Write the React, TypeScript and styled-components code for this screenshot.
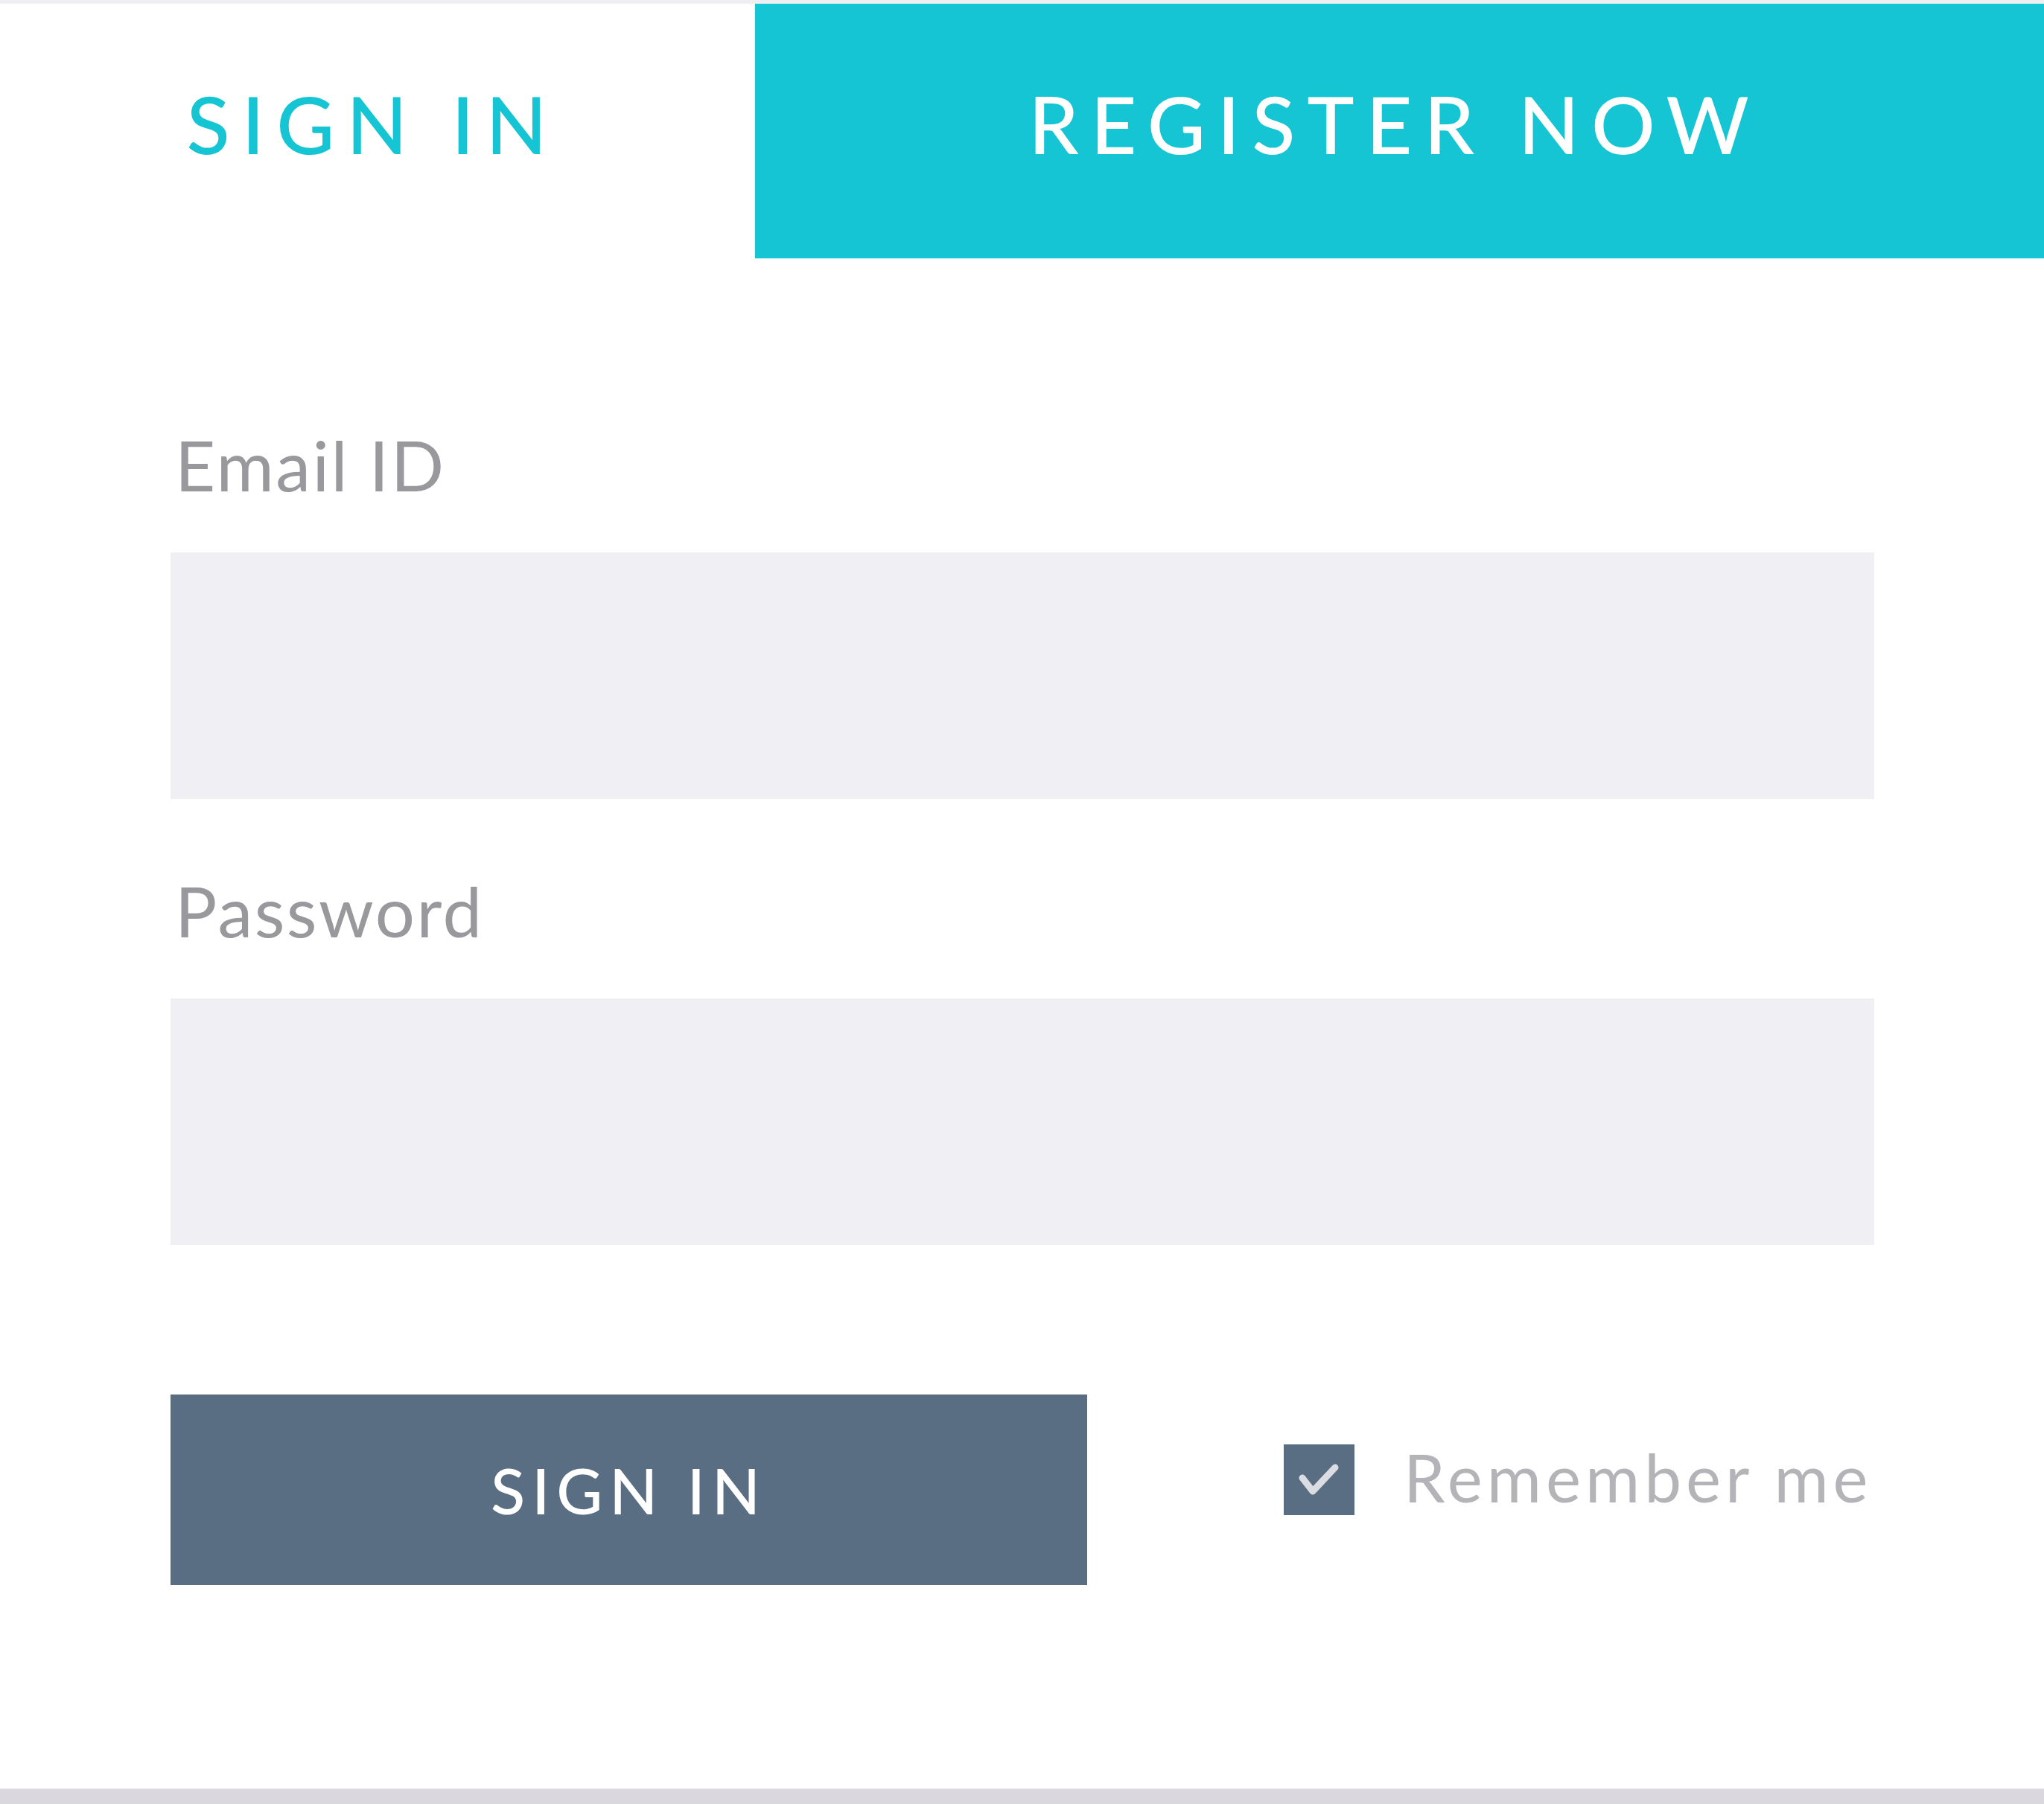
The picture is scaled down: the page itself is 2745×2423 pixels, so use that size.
import React from "react";
import styled, { createGlobalStyle } from "styled-components";

const Global = createGlobalStyle`
  html, body {
    margin: 0;
    padding: 0;
    background: #dad7df;
  }
  body {
    font-family: Lato, "Open Sans", sans-serif;
  }
`;

const Page = styled.div`
  width: 2745px;
  border-top: 5px solid #efeff3;
  background: #dad7df;
  padding-bottom: 19px;
`;

const Card = styled.div`
  background: #ffffff;
  height: 2398px;
  border-bottom: 1px solid #e8e7ec;
  box-sizing: border-box;
  display: flex;
  flex-direction: column;
`;

const Tabs = styled.div`
  display: flex;
  height: 342px;
`;

const Tab = styled.div<{ $active?: boolean }>`
  display: flex;
  align-items: center;
  justify-content: center;
  flex: ${(p) => (p.$active ? "0 0 1014px" : "1 1 auto")};
  background: ${(p) => (p.$active ? "#ffffff" : "#16c5d3")};
  color: ${(p) => (p.$active ? "#16c5d3" : "#ffffff")};
  font-family: Lato, sans-serif;
  font-size: 107px;
  font-weight: 500;
  letter-spacing: 16px;
  line-height: 1;
  padding-right: 13px;
  padding-bottom: 22px;
  box-sizing: border-box;
`;

const Form = styled.div`
  padding: 230px 228px 0 229px;
  display: flex;
  flex-direction: column;
`;

const Label = styled.div<{ $first?: boolean }>`
  font-family: Lato, sans-serif;
  font-size: 94px;
  line-height: 94px;
  color: #98989d;
  letter-spacing: 2.5px;
  margin-top: ${(p) => (p.$first ? "0" : "103px")};
  margin-bottom: 71px;
  padding-left: 6px;
`;

const Input = styled.div`
  height: 331px;
  background: #efeff4;
`;

const Actions = styled.div`
  display: flex;
  align-items: flex-start;
  margin-top: 201px;
`;

const SubmitButton = styled.div`
  width: 1231px;
  height: 256px;
  background: #5a6e83;
  color: #ffffff;
  display: flex;
  align-items: center;
  justify-content: center;
  font-family: Lato, sans-serif;
  font-size: 85px;
  font-weight: 500;
  letter-spacing: 9px;
  box-sizing: border-box;
  line-height: 1;
`;

const Remember = styled.div`
  display: flex;
  align-items: center;
  margin-left: 264px;
  margin-top: 67px;
  gap: 66px;
`;

const Box = styled.div`
  width: 95px;
  height: 95px;
  background: #5a6e83;
  display: flex;
  flex: 0 0 auto;
`;

const RememberText = styled.div`
  font-family: Lato, sans-serif;
  font-size: 89px;
  line-height: 1;
  color: #b4b4b8;
  letter-spacing: 6px;
  margin-top: -8px;
`;

export default function App() {
  return (
    <>
      <Global />
      <Page>
        <Card>
          <Tabs>
            <Tab $active>SIGN IN</Tab>
            <Tab>REGISTER NOW</Tab>
          </Tabs>
          <Form>
            <Label $first>Email ID</Label>
            <Input />
            <Label>Password</Label>
            <Input />
            <Actions>
              <SubmitButton>SIGN IN</SubmitButton>
              <Remember>
                <Box>
                  <svg width="95" height="95" viewBox="0 0 95 95">
                    <polyline
                      points="25,45 39,63 69,31"
                      fill="none"
                      stroke="#dcdde2"
                      strokeWidth="9"
                      strokeLinecap="round"
                      strokeLinejoin="round"
                    />
                  </svg>
                </Box>
                <RememberText>Remember me</RememberText>
              </Remember>
            </Actions>
          </Form>
        </Card>
      </Page>
    </>
  );
}
